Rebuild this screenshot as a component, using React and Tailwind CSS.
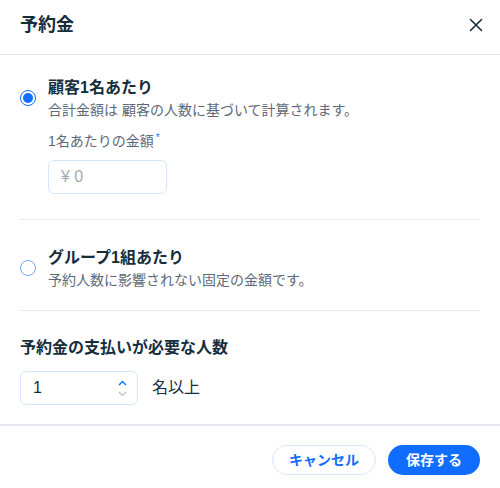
import React from "react";

const font = { fontFamily: '"Liberation Sans", "Noto Sans CJK JP", sans-serif' };

const Radio = ({ checked }) => (
  <span
    className={`flex h-4 w-4 shrink-0 items-center justify-center rounded-full border ${
      checked ? "border-[#116dff]" : "border-[#6fa5ff]"
    } bg-white`}
  >
    {checked && <span className="h-[10px] w-[10px] rounded-full bg-[#116dff]" />}
  </span>
);

const Option = ({ checked, title, desc }) => (
  <div className="flex items-center gap-3">
    <Radio checked={checked} />
    <div>
      <div className="text-base font-bold leading-6 text-[#162d3d]">{title}</div>
      <div className="text-sm leading-5 text-[#5d6878]">{desc}</div>
    </div>
  </div>
);

export default function App() {
  return (
    <div className="h-[488px] w-[500px] bg-white" style={font}>
      {/* Header */}
      <div className="flex h-[55px] items-center justify-between border-b border-[#dfe5eb] pb-[4px] pl-5 pr-4">
        <h1 className="text-lg font-bold text-[#162d3d]">予約金</h1>
        <svg width="14" height="14" viewBox="0 0 14 14" className="mr-[1px]">
          <path d="M1.5 1.5l11 11M12.5 1.5l-11 11" stroke="#162d3d" strokeWidth="1.6" strokeLinecap="round" />
        </svg>
      </div>

      <div className="px-5">
        {/* Per customer */}
        <div className="border-b border-[#e5ebf1] pb-[25px] pt-[21px]">
          <Option checked title="顧客1名あたり" desc="合計金額は 顧客の人数に基づいて計算されます。" />
          <div className="pl-7 pt-[11px]">
            <div className="text-sm leading-5 text-[#5d6878]">
              1名あたりの金額<sup className="ml-[2px] text-[10px] text-[#116dff]">*</sup>
            </div>
            <div className="mt-[9px] flex h-[34px] w-[119px] items-center rounded-md border border-[#d6e6fe] px-3 text-base text-[#a3a9b4]">
              ¥ 0
            </div>
          </div>
        </div>

        {/* Per group */}
        <div className="border-b border-[#e5ebf1] pb-[20px] pt-[26px]">
          <Option title="グループ1組あたり" desc="予約人数に影響されない固定の金額です。" />
        </div>

        {/* Number of people */}
        <div className="pb-[19px] pt-[25px]">
          <div className="text-base font-bold leading-6 text-[#162d3d]">予約金の支払いが必要な人数</div>
          <div className="mt-[11px] flex items-center gap-[14px]">
            <div className="flex h-[34px] w-[118px] items-center justify-between rounded-md border border-[#d6e6fe] pl-3 pr-[10px]">
              <span className="text-base text-[#162d3d]">1</span>
              <div className="flex flex-col items-center gap-[5px]">
                <svg width="9" height="6" viewBox="0 0 9 6">
                  <path d="M1 5l3.5-3.5L8 5" fill="none" stroke="#116dff" strokeWidth="1.4" />
                </svg>
                <svg width="9" height="6" viewBox="0 0 9 6">
                  <path d="M1 1l3.5 3.5L8 1" fill="none" stroke="#b6bcc6" strokeWidth="1.2" />
                </svg>
              </div>
            </div>
            <span className="text-base text-[#162d3d]">名以上</span>
          </div>
        </div>
      </div>

      {/* Footer */}
      <div className="flex justify-end gap-3 border-t-2 border-[#e5e9ef] px-5 pt-[19px]">
        <button className="h-[30px] w-[104px] rounded-full border border-[#d6e6fe] text-sm font-bold text-[#116dff]">
          キャンセル
        </button>
        <button className="h-[30px] w-[92px] rounded-full bg-[#116dff] text-sm font-bold text-white">
          保存する
        </button>
      </div>
    </div>
  );
}
